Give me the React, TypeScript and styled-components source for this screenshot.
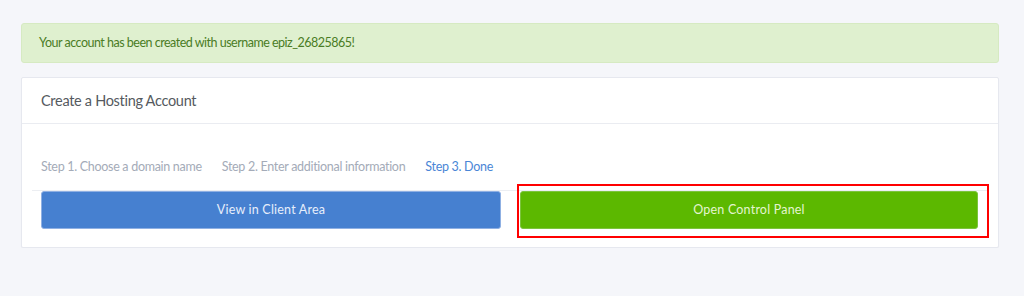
import React from "react";
import styled, { createGlobalStyle } from "styled-components";

const Global = createGlobalStyle`
  html, body { margin: 0; padding: 0; background: #f5f6fa; }
  body { font-family: Lato, "Open Sans", sans-serif; }
`;

const Page = styled.div`
  padding: 23px 25px 0 21px;
  display: flex;
  flex-direction: column;
  gap: 14px;
`;

const Alert = styled.div`
  height: 40px;
  box-sizing: border-box;
  background: #dff0cf;
  border: 1px solid #d6eac2;
  border-radius: 3px;
  color: #4a7c25;
  font-size: 12.5px;
  letter-spacing: -0.5px;
  display: flex;
  align-items: center;
  padding: 0 17px 1px;
`;

const Card = styled.div`
  background: #fff;
  border: 1px solid #e6e8ef;
  border-radius: 2px;
  box-shadow: 0 1px 1px rgba(30, 40, 80, 0.04);
`;

const CardHeader = styled.div`
  height: 46px;
  box-sizing: border-box;
  border-bottom: 1px solid #eaecf1;
  display: flex;
  align-items: center;
  padding: 0 19px 1px;
  font-size: 14.5px;
  letter-spacing: -0.3px;
  color: #555a60;
`;

const CardBody = styled.div`
  padding: 36px 20px 18px 19px;
`;

const Tabs = styled.div`
  display: flex;
  gap: 20px;
  margin: 0 -10px 0 -9px;
  padding: 0 9px;
  border-bottom: 1px solid #eceef2;
`;

const Tab = styled.div<{ $active?: boolean }>`
  font-size: 12.5px;
  letter-spacing: -0.3px;
  color: ${(p) => (p.$active ? "#4a86d6" : "#a4abb8")};
  padding: 0 0 16px;
  line-height: 14px;
`;

const Actions = styled.div`
  display: grid;
  grid-template-columns: 460px 1fr;
  column-gap: 19px;
`;

const Button = styled.div<{ $variant: "blue" | "green" }>`
  position: relative;
  height: 38px;
  box-sizing: border-box;
  border-radius: 3px;
  display: flex;
  align-items: center;
  justify-content: center;
  font-size: 12.5px;
  letter-spacing: 0.2px;
  color: ${(p) => (p.$variant === "blue" ? "#e6eefb" : "#e4f5d0")};
  background: ${(p) => (p.$variant === "blue" ? "#4680d0" : "#5cb800")};
  border: 1px solid ${(p) => (p.$variant === "blue" ? "#8fb0e3" : "#7cc43c")};
  padding-bottom: 1px;
`;

const Highlight = styled.div`
  position: absolute;
  left: -4px;
  right: -12px;
  top: -8px;
  bottom: -10px;
  border: 2px solid #ff0000;
  pointer-events: none;
`;

export default function App() {
  return (
    <>
      <Global />
      <Page>
        <Alert>Your account has been created with username epiz_26825865!</Alert>
        <Card>
          <CardHeader>Create a Hosting Account</CardHeader>
          <CardBody>
            <Tabs>
              <Tab>Step 1. Choose a domain name</Tab>
              <Tab>Step 2. Enter additional information</Tab>
              <Tab $active>Step 3. Done</Tab>
            </Tabs>
            <Actions>
              <Button $variant="blue">View in Client Area</Button>
              <Button $variant="green">
                Open Control Panel
                <Highlight />
              </Button>
            </Actions>
          </CardBody>
        </Card>
      </Page>
    </>
  );
}
